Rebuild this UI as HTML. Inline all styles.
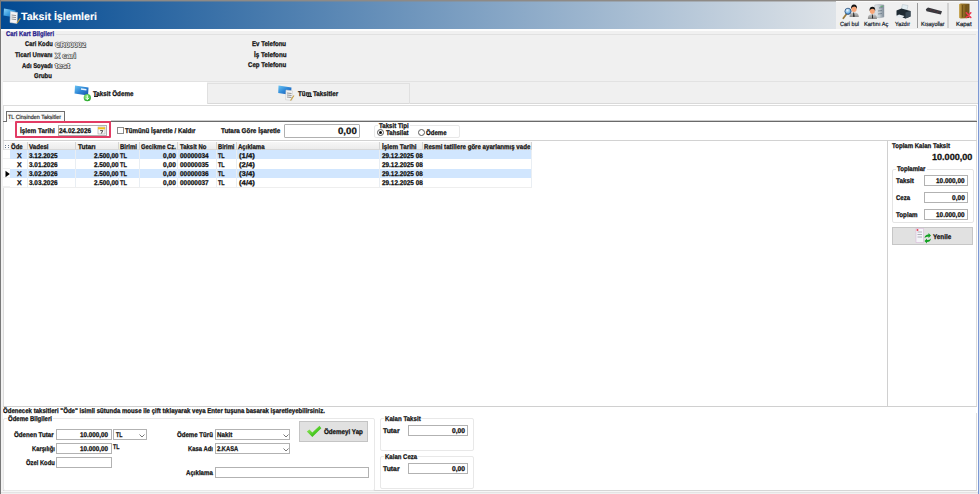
<!DOCTYPE html>
<html><head><meta charset="utf-8">
<style>
*{margin:0;padding:0;box-sizing:border-box}
html,body{width:980px;height:494px;overflow:hidden;background:#fff}
body{position:relative;font-family:"Liberation Sans",sans-serif}
.a{position:absolute}
.t{position:absolute;white-space:nowrap;line-height:10px;text-rendering:geometricPrecision;transform-origin:0 0;-webkit-text-stroke:0.25px currentColor}
</style></head><body>
<div class="a" style="left:0px;top:0px;width:980px;height:494px;background:#fff"></div>
<div class="a" style="left:1px;top:1px;width:835px;height:28px;background:linear-gradient(to right,rgb(2,74,146),rgb(222,227,232))"></div>
<div class="a" style="left:836px;top:1px;width:142px;height:28px;background:#f0f0f0"></div>
<div class="a" style="left:836px;top:1px;width:142px;height:1px;background:#fafafa"></div>
<div class="a" style="left:1px;top:29px;width:977px;height:2px;background:#fcfcfc"></div>
<div class="a" style="left:1px;top:31px;width:977px;height:51px;background:#f0f0f0"></div>
<div class="a" style="left:56px;top:34px;width:920px;height:1px;background:#e1e1e1"></div>
<div class="a" style="left:1px;top:81px;width:977px;height:1px;background:#e2e2e2"></div>
<div class="a" style="left:207px;top:82px;width:771px;height:22px;background:#f0f0f0"></div>
<div class="a" style="left:207px;top:103px;width:771px;height:1px;background:#d9d9d9"></div>
<div class="a" style="left:207px;top:83px;width:203px;height:21px;border:1px solid #e0e0e0;border-bottom:none"></div>
<div class="a" style="left:1px;top:104px;width:977px;height:1px;background:#fff"></div>
<div class="a" style="left:3px;top:105px;width:974px;height:1px;background:#dcdcdc"></div>
<div class="a" style="left:3px;top:105px;width:1px;height:302px;background:#dcdcdc"></div>
<div class="a" style="left:976px;top:105px;width:1px;height:302px;background:#dcdcdc"></div>
<div class="a" style="left:976px;top:413px;width:1px;height:78px;background:#dcdcdc"></div>
<div class="a" style="left:3px;top:490px;width:974px;height:1px;background:#d6d6d6"></div>
<div class="a" style="left:6px;top:111px;width:59px;height:11px;background:#fafafa;border:1px solid #6e6e6e;border-bottom:none"></div>
<div class="a" style="left:3px;top:121px;width:3px;height:1px;background:#6e6e6e"></div>
<div class="a" style="left:65px;top:121px;width:912px;height:1px;background:#6a6a6a"></div>
<div class="a" style="left:111px;top:120px;width:866px;height:1px;background:#cdcdcd"></div>
<div class="a" style="left:15px;top:121px;width:96px;height:17px;border:2px solid #e23c64;border-radius:1px"></div>
<div class="a" style="left:58px;top:125px;width:49px;height:11px;background:#fff;border:1px solid #b0b0b0"></div>
<div class="a" style="left:117px;top:127px;width:7px;height:7px;background:#fff;border:1px solid #8a8a8a"></div>
<div class="a" style="left:284px;top:124px;width:76px;height:14px;background:#fff;border:1px solid #b0b0b0;border-radius:1px"></div>
<div class="a" style="left:374px;top:125px;width:86px;height:13px;border:1px solid #e8e8e8;border-radius:2px"></div>
<div class="a" style="left:377px;top:129px;width:7px;height:7px;background:#fff;border:1px solid #5a5a5a;border-radius:50%"></div>
<div class="a" style="left:379px;top:131px;width:3px;height:3px;background:#111;border-radius:50%"></div>
<div class="a" style="left:418px;top:129px;width:7px;height:7px;background:#fff;border:1px solid #5a5a5a;border-radius:50%"></div>
<div class="a" style="left:3px;top:140px;width:974px;height:1px;background:#d2d2d2"></div>
<div class="a" style="left:887px;top:140px;width:1px;height:266px;background:#d0d0d0"></div>
<div class="a" style="left:3px;top:406px;width:974px;height:1px;background:#d0d0d0"></div>
<div class="a" style="left:4px;top:142px;width:6px;height:8px;background:#fafafa;border-bottom:1px solid #e4e4e4"></div>
<div class="a" style="left:10px;top:142px;width:18px;height:8px;background:linear-gradient(#f6f6f6,#ececec);border-right:1px solid #d4d4d4;border-bottom:1px solid #d8d8d8"></div>
<div class="a" style="left:28px;top:142px;width:48px;height:8px;background:linear-gradient(#f6f6f6,#ececec);border-right:1px solid #d4d4d4;border-bottom:1px solid #d8d8d8"></div>
<div class="a" style="left:76px;top:142px;width:43px;height:8px;background:linear-gradient(#f6f6f6,#ececec);border-right:1px solid #d4d4d4;border-bottom:1px solid #d8d8d8"></div>
<div class="a" style="left:119px;top:142px;width:21px;height:8px;background:linear-gradient(#f6f6f6,#ececec);border-right:1px solid #d4d4d4;border-bottom:1px solid #d8d8d8"></div>
<div class="a" style="left:140px;top:142px;width:38px;height:8px;background:linear-gradient(#f6f6f6,#ececec);border-right:1px solid #d4d4d4;border-bottom:1px solid #d8d8d8"></div>
<div class="a" style="left:178px;top:142px;width:39px;height:8px;background:linear-gradient(#f6f6f6,#ececec);border-right:1px solid #d4d4d4;border-bottom:1px solid #d8d8d8"></div>
<div class="a" style="left:217px;top:142px;width:20px;height:8px;background:linear-gradient(#f6f6f6,#ececec);border-right:1px solid #d4d4d4;border-bottom:1px solid #d8d8d8"></div>
<div class="a" style="left:237px;top:142px;width:143px;height:8px;background:linear-gradient(#f6f6f6,#ececec);border-right:1px solid #d4d4d4;border-bottom:1px solid #d8d8d8"></div>
<div class="a" style="left:380px;top:142px;width:43px;height:8px;background:linear-gradient(#f6f6f6,#ececec);border-right:1px solid #d4d4d4;border-bottom:1px solid #d8d8d8"></div>
<div class="a" style="left:423px;top:142px;width:109px;height:8px;background:linear-gradient(#f6f6f6,#ececec);border-right:1px solid #d4d4d4;border-bottom:1px solid #d8d8d8"></div>
<div class="a" style="left:10px;top:150px;width:522px;height:9px;background:#d1e6fe"></div>
<div class="a" style="left:3px;top:150px;width:7px;height:9px;background:#fff;border-bottom:1px solid #f0f0f0"></div>
<div class="a" style="left:3px;top:159px;width:7px;height:10px;background:#fff;border-bottom:1px solid #f0f0f0"></div>
<div class="a" style="left:10px;top:169px;width:522px;height:9px;background:#d1e6fe"></div>
<div class="a" style="left:3px;top:169px;width:7px;height:9px;background:#fff;border-bottom:1px solid #f0f0f0"></div>
<div class="a" style="left:3px;top:178px;width:7px;height:9px;background:#fff;border-bottom:1px solid #f0f0f0"></div>
<div class="a" style="left:27px;top:150px;width:1px;height:37px;background:#e9eef3"></div>
<div class="a" style="left:75px;top:150px;width:1px;height:37px;background:#e9eef3"></div>
<div class="a" style="left:118px;top:150px;width:1px;height:37px;background:#e9eef3"></div>
<div class="a" style="left:139px;top:150px;width:1px;height:37px;background:#e9eef3"></div>
<div class="a" style="left:177px;top:150px;width:1px;height:37px;background:#e9eef3"></div>
<div class="a" style="left:216px;top:150px;width:1px;height:37px;background:#e9eef3"></div>
<div class="a" style="left:236px;top:150px;width:1px;height:37px;background:#e9eef3"></div>
<div class="a" style="left:379px;top:150px;width:1px;height:37px;background:#e9eef3"></div>
<div class="a" style="left:422px;top:150px;width:1px;height:37px;background:#e9eef3"></div>
<div class="a" style="left:531px;top:150px;width:1px;height:37px;background:#e9eef3"></div>
<div class="a" style="left:3px;top:187px;width:529px;height:1px;background:#eeeeee"></div>
<svg class="a" style="left:5px;top:170px" width="6" height="8"><path d="M0.5 0.8 L4.8 4 L0.5 7.2Z" fill="#000"/></svg>
<div class="a" style="left:5px;top:145px;width:1px;height:1px;background:#6a7a90"></div><div class="a" style="left:5px;top:147px;width:1px;height:1px;background:#6a7a90"></div><div class="a" style="left:8px;top:145px;width:1px;height:1px;background:#6a7a90"></div><div class="a" style="left:8px;top:147px;width:1px;height:1px;background:#6a7a90"></div>
<div class="a" style="left:917px;top:3px;width:1px;height:25px;background:#9a9a9a"></div>
<div class="a" style="left:947px;top:3px;width:2px;height:25px;background:#d2d2d2"></div>
<div class="a" style="left:94px;top:96px;width:4px;height:1px;background:#222"></div>
<div class="a" style="left:307px;top:96px;width:5px;height:1px;background:#222"></div>
<div class="a" style="left:378px;top:124px;width:32px;height:3px;background:#fff"></div>
<div class="a" style="left:892px;top:169px;width:82px;height:54px;border:1px solid #e4e4e4;border-radius:2px"></div>
<div class="a" style="left:896px;top:168px;width:31px;height:3px;background:#fff"></div>
<div class="a" style="left:924px;top:175px;width:44px;height:11px;background:#fff;border:1px solid #b2b2b2"></div>
<div class="a" style="left:924px;top:192px;width:44px;height:11px;background:#fff;border:1px solid #b2b2b2"></div>
<div class="a" style="left:924px;top:209px;width:44px;height:11px;background:#fff;border:1px solid #b2b2b2"></div>
<div class="a" style="left:892px;top:227px;width:81px;height:18px;background:#e1e1e1;border:1px solid #c6c6c6"></div>
<div class="a" style="left:3px;top:418px;width:372px;height:73px;border:1px solid #e8e8e8;border-radius:2px"></div>
<div class="a" style="left:7px;top:417px;width:46px;height:3px;background:#fff"></div>
<div class="a" style="left:56px;top:429px;width:56px;height:11px;background:#fff;border:1px solid #b2b2b2"></div>
<div class="a" style="left:56px;top:443px;width:56px;height:11px;background:#fff;border:1px solid #b2b2b2"></div>
<div class="a" style="left:56px;top:457px;width:56px;height:11px;background:#fff;border:1px solid #b2b2b2"></div>
<div class="a" style="left:113px;top:429px;width:34px;height:11px;background:#fff;border:1px solid #b2b2b2"></div>
<div class="a" style="left:215px;top:429px;width:75px;height:11px;background:#fff;border:1px solid #b2b2b2"></div>
<div class="a" style="left:215px;top:443px;width:75px;height:11px;background:#fff;border:1px solid #b2b2b2"></div>
<div class="a" style="left:215px;top:467px;width:154px;height:11px;background:#fff;border:1px solid #b2b2b2"></div>
<svg class="a" style="left:139px;top:434px" width="6" height="4"><path d="M0.5 0.5 L3 3 L5.5 0.5" fill="none" stroke="#555" stroke-width="0.8"/></svg>
<svg class="a" style="left:283px;top:434px" width="6" height="4"><path d="M0.5 0.5 L3 3 L5.5 0.5" fill="none" stroke="#555" stroke-width="0.8"/></svg>
<svg class="a" style="left:283px;top:448px" width="6" height="4"><path d="M0.5 0.5 L3 3 L5.5 0.5" fill="none" stroke="#555" stroke-width="0.8"/></svg>
<div class="a" style="left:299px;top:421px;width:69px;height:21px;background:#e1e1e1;border:1px solid #c4c4c4"></div>
<div class="a" style="left:380px;top:418px;width:94px;height:33px;border:1px solid #e8e8e8;border-radius:2px"></div>
<div class="a" style="left:380px;top:456px;width:94px;height:33px;border:1px solid #e8e8e8;border-radius:2px"></div>
<div class="a" style="left:384px;top:417px;width:37px;height:3px;background:#fff"></div>
<div class="a" style="left:384px;top:455px;width:34px;height:3px;background:#fff"></div>
<div class="a" style="left:408px;top:425px;width:60px;height:11px;background:#fff;border:1px solid #b2b2b2"></div>
<div class="a" style="left:408px;top:463px;width:60px;height:11px;background:#fff;border:1px solid #b2b2b2"></div>
<div class="a" style="left:1px;top:491px;width:977px;height:1px;background:#f6f6f6"></div>
<div class="a" style="left:1px;top:492px;width:977px;height:1px;background:#e4e4e4"></div>
<div class="a" style="left:1px;top:493px;width:977px;height:1px;background:#f0f0f0"></div>
<div class="a" style="left:0px;top:0px;width:980px;height:1px;background:#8e8a86"></div>
<div class="a" style="left:1px;top:1px;width:835px;height:1px;background:rgba(142,138,134,0.45)"></div>
<!-- title icon -->
<svg class="a" style="left:3px;top:7px" width="19" height="18" viewBox="0 0 19 18">
 <defs><linearGradient id="cg" x1="0" y1="0" x2="1" y2="1"><stop offset="0" stop-color="#8fd4f8"/><stop offset="0.5" stop-color="#3a9ee0"/><stop offset="1" stop-color="#1b5fb0"/></linearGradient></defs>
 <path d="M1 1.5 L12.5 3.5 L12 10.5 L0.5 8.5Z" fill="url(#cg)"/>
 <path d="M7.5 4.5 L14.5 5.5 L14 16.5 L7 15.5Z" fill="#f4f4f4" stroke="#cfcfcf" stroke-width="0.5"/>
 <path d="M8.5 8 L13 8.6 M8.5 10 L13 10.6 M8.5 12 L13 12.6" stroke="#8a8a8a" stroke-width="0.9"/>
 <path d="M17.5 11 L14 16" stroke="#c8a040" stroke-width="1.2"/>
</svg>
<!-- tab1 icon -->
<svg class="a" style="left:74px;top:84px" width="18" height="18" viewBox="0 0 18 18">
 <defs><linearGradient id="cg2" x1="0" y1="0" x2="1" y2="1"><stop offset="0" stop-color="#6cc6f4"/><stop offset="0.5" stop-color="#2d86d6"/><stop offset="1" stop-color="#1a4fa8"/></linearGradient>
 <radialGradient id="gg" cx="0.4" cy="0.35" r="0.7"><stop offset="0" stop-color="#9ef08a"/><stop offset="1" stop-color="#1aa020"/></radialGradient></defs>
 <path d="M1 1.5 L14.5 3.5 L14 11.5 L0.5 9.5Z" fill="url(#cg2)"/>
 <path d="M7 4.2 L12.5 5 L12.4 6.5 L6.9 5.7Z" fill="#e8f4ff"/>
 <circle cx="13.3" cy="13.7" r="3.6" fill="url(#gg)"/>
 <path d="M13.3 11.3 L13.3 15.5 M11.6 13.9 L13.3 15.7 L15 13.9" stroke="#f0fff0" stroke-width="1" fill="none"/>
</svg>
<!-- tab2 icon -->
<svg class="a" style="left:278px;top:85px" width="17" height="17" viewBox="0 0 17 17">
 <path d="M0.5 0.5 L13.5 2.5 L13 10 L0.2 8Z" fill="url(#cg2)"/>
 <path d="M8 5 L14.5 5.8 L14 15.5 L7.5 14.7Z" fill="#f2f2f2" stroke="#c8c8c8" stroke-width="0.5"/>
 <path d="M9 8 L13.5 8.5 M9 10 L13.5 10.5 M9 12 L13.5 12.5" stroke="#8a8a8a" stroke-width="0.9"/>
 <path d="M16 10.5 L12.5 15.5" stroke="#c8a040" stroke-width="1.1"/>
</svg>
<!-- cari bul -->
<svg class="a" style="left:842px;top:3px" width="18" height="17" viewBox="0 0 18 17">
 <defs><radialGradient id="lens" cx="0.4" cy="0.35" r="0.7"><stop offset="0" stop-color="#f0f8ff"/><stop offset="0.6" stop-color="#7ab8e8"/><stop offset="1" stop-color="#2a68a8"/></radialGradient>
 <linearGradient id="shirt" x1="0" y1="0" x2="0" y2="1"><stop offset="0" stop-color="#c8c8c8"/><stop offset="1" stop-color="#888"/></linearGradient></defs>
 <path d="M7.5 14 Q7.5 9.8 11 9.5 L13 9.5 Q16.8 9.8 16.8 14Z" fill="url(#shirt)"/>
 <path d="M11.3 9.6 L12 9.6 L12.6 13.5 L11.9 14 L11.2 13.5Z" fill="#1a1a1a"/>
 <ellipse cx="12" cy="5.8" rx="2.7" ry="3.3" fill="#f7a577"/>
 <path d="M9.1 6 Q8.8 1.6 12 1.5 Q15.4 1.5 15 6 Q14.6 3.6 12.2 3.5 Q9.8 3.5 9.1 6Z" fill="#141414"/>
 <path d="M1.3 15.3 L4.3 11.2" stroke="#9a7a3a" stroke-width="1.7" stroke-linecap="round"/>
 <circle cx="6" cy="8.3" r="3.1" fill="url(#lens)" stroke="#30507a" stroke-width="0.8"/>
</svg>
<!-- kartini ac -->
<svg class="a" style="left:867px;top:3px" width="19" height="17" viewBox="0 0 19 17">
 <defs><linearGradient id="cyl" x1="0" y1="0" x2="1" y2="0"><stop offset="0" stop-color="#e8ecef"/><stop offset="0.5" stop-color="#c4ccd2"/><stop offset="1" stop-color="#7a8894"/></linearGradient></defs>
 <path d="M7.8 2 Q12.5 1 17 2 L17 14 Q12.5 15.5 7.8 14Z" fill="url(#cyl)" stroke="#a0aab2" stroke-width="0.5"/>
 <path d="M12 5 L15.5 4.5 M11 8 L15 7.5 M11 11 L15 10.5" stroke="#6a7a86" stroke-width="0.8"/>
 <path d="M13.5 3.5 L16 3.2" stroke="#50b060" stroke-width="0.8"/>
 <path d="M0.8 16 Q0.8 11.6 4.3 11.3 L6.3 11.3 Q10 11.6 10 16Z" fill="url(#shirt)"/>
 <path d="M4.9 11.4 L5.6 11.4 L6.1 15.3 L5.2 15.6Z" fill="#1a1a1a"/>
 <ellipse cx="5.3" cy="7.8" rx="2.6" ry="3.1" fill="#f7a577"/>
 <path d="M2.5 8 Q2.3 3.8 5.4 3.8 Q8.5 3.8 8.2 8 Q7.8 5.8 5.5 5.7 Q3.2 5.7 2.5 8Z" fill="#141414"/>
</svg>
<!-- yazdir -->
<svg class="a" style="left:895px;top:3px" width="17" height="17" viewBox="0 0 17 17">
 <path d="M7.5 1.5 L13 2.5 L11.5 8.5 L6 7.5Z" fill="#e4eef2" stroke="#b0bcc4" stroke-width="0.5"/>
 <path d="M1.5 7.5 L6.5 5.5 L15.5 8 L15.5 13.5 L10.5 15.5 L1.5 12.5Z" fill="#1e2a32"/>
 <path d="M10.5 9.5 L15.5 8 L15.5 13.5 L10.5 15.5Z" fill="#3a4a56"/>
 <path d="M0.5 13.5 L4 11.5 L9.5 13 L6.5 15.5Z" fill="#e6ecf0"/>
</svg>
<!-- kisayollar -->
<svg class="a" style="left:925px;top:7px" width="18" height="9" viewBox="0 0 18 9">
 <path d="M0.8 2.3 L3 0.6 L17 4.3 L15.8 7.6 L1.5 4.2Z" fill="#38383e"/>
 <path d="M5 2.8 L6.3 3.1 M8.5 3.8 L9.8 4.1 M12 4.8 L13.3 5.1" stroke="#8a3030" stroke-width="0.6"/>
</svg>
<!-- kapat -->
<svg class="a" style="left:958px;top:3px" width="14" height="16" viewBox="0 0 14 16">
 <defs><linearGradient id="dg" x1="0" y1="0" x2="1" y2="0"><stop offset="0" stop-color="#d0b060"/><stop offset="0.25" stop-color="#9a7628"/><stop offset="1" stop-color="#6a4e18"/></linearGradient></defs>
 <path d="M1 1.2 L2.5 0.5 L11.5 0.8 L11.5 15 L2.5 15.5 L1 14.8Z" fill="url(#dg)"/>
 <path d="M4.5 2 L4.5 14.3 M8 2 L8 14.3" stroke="#5e4414" stroke-width="0.7"/>
 <path d="M8.3 9.8 L12.8 14.5 M12.8 9.8 L8.3 14.5" stroke="#f03850" stroke-width="1.6" stroke-linecap="round"/>
</svg>
<!-- calendar -->
<svg class="a" style="left:97px;top:126px" width="9" height="9" viewBox="0 0 9 9">
 <rect x="1" y="1" width="7" height="7" fill="#fafafa" stroke="#a0a0a0" stroke-width="0.6"/>
 <rect x="1" y="1.3" width="7" height="2" fill="#f0c020"/>
 <path d="M3.2 4.6 L5.8 4.6 L4.3 7.5" stroke="#333" stroke-width="0.9" fill="none"/>
</svg>
<!-- yenile -->
<svg class="a" style="left:915px;top:228px" width="17" height="16" viewBox="0 0 17 16">
 <path d="M1 0.5 L8.5 0.5 L8.5 14.5 L1 14.5Z" fill="#f4f4f8" stroke="#d8b8d8" stroke-width="0.6"/>
 <path d="M2.5 4 L7 4 M2.5 6.5 L7 6.5 M2.5 9 L7 9" stroke="#a0a0a8" stroke-width="0.8"/>
 <circle cx="2.5" cy="2" r="1" fill="#e84050"/>
 <path d="M9.5 10 Q10 6.5 13.5 6.5 L13.5 5 L16 7.5 L13.5 10 L13.5 8.5 Q11 8.5 9.5 10Z" fill="#10a020"/>
 <path d="M16 10.5 Q15.5 14 12 14 L12 15.5 L9.5 13 L12 10.5 L12 12 Q14.5 12 16 10.5Z" fill="#10a020"/>
</svg>
<!-- check -->
<svg class="a" style="left:306px;top:425px" width="17" height="14" viewBox="0 0 17 14">
 <defs><linearGradient id="ck" x1="0" y1="0" x2="1" y2="1"><stop offset="0" stop-color="#a8ee70"/><stop offset="0.6" stop-color="#48c820"/><stop offset="1" stop-color="#208a10"/></linearGradient></defs>
 <path d="M0.8 6.5 L3.5 4.5 L6.3 7.5 L13.5 0.8 L15.3 3.2 L6.3 12 Z" fill="url(#ck)"/>
</svg>

<div class="t" style="left:10.70px;top:143px;font-size:6.9px;font-weight:bold;color:#101010;transform:scaleX(0.864);">Öde</div>
<div class="t" style="left:29.29px;top:143px;font-size:6.9px;font-weight:bold;color:#101010;transform:scaleX(0.897);">Vadesi</div>
<div class="t" style="left:77.67px;top:143px;font-size:6.9px;font-weight:bold;color:#101010;transform:scaleX(0.946);">Tutarı</div>
<div class="t" style="left:120.20px;top:143px;font-size:6.9px;font-weight:bold;color:#101010;transform:scaleX(0.864);">Birimi</div>
<div class="t" style="left:141.11px;top:143px;font-size:6.9px;font-weight:bold;color:#101010;transform:scaleX(0.850);">Gecikme Cz.</div>
<div class="t" style="left:179.70px;top:143px;font-size:6.9px;font-weight:bold;color:#101010;transform:scaleX(0.864);">Taksit No</div>
<div class="t" style="left:217.71px;top:143px;font-size:6.9px;font-weight:bold;color:#101010;transform:scaleX(0.843);">Birimi</div>
<div class="t" style="left:238.20px;top:143px;font-size:6.9px;font-weight:bold;color:#101010;transform:scaleX(0.878);">Açıklama</div>
<div class="t" style="left:381.68px;top:143px;font-size:6.9px;font-weight:bold;color:#101010;transform:scaleX(0.915);">İşlem Tarihi</div>
<div class="t" style="left:423.99px;top:143px;font-size:6.9px;font-weight:bold;color:#101010;transform:scaleX(0.890);">Resmi tatillere göre ayarlanmış vade</div>
<div class="t" style="left:16.65px;top:152px;font-size:6.9px;font-weight:bold;color:#101010;transform:scaleX(1.022);">X</div>
<div class="t" style="left:29.28px;top:152px;font-size:6.9px;font-weight:bold;color:#101010;transform:scaleX(0.930);">3.12.2025</div>
<div class="t" style="left:93.68px;top:152px;font-size:6.9px;font-weight:bold;color:#101010;transform:scaleX(0.917);">2.500,00</div>
<div class="t" style="left:120.42px;top:152px;font-size:6.9px;font-weight:bold;color:#101010;transform:scaleX(0.814);">TL</div>
<div class="t" style="left:163.17px;top:152px;font-size:6.9px;font-weight:bold;color:#101010;transform:scaleX(0.958);">0,00</div>
<div class="t" style="left:179.68px;top:152px;font-size:6.9px;font-weight:bold;color:#101010;transform:scaleX(0.933);">00000034</div>
<div class="t" style="left:217.93px;top:152px;font-size:6.9px;font-weight:bold;color:#101010;transform:scaleX(0.788);">TL</div>
<div class="t" style="left:239.41px;top:152px;font-size:6.9px;font-weight:bold;color:#101010;transform:scaleX(1.126);">(1/4)</div>
<div class="t" style="left:381.68px;top:152px;font-size:6.9px;font-weight:bold;color:#101010;transform:scaleX(0.925);">29.12.2025 08</div>
<div class="t" style="left:16.65px;top:161px;font-size:6.9px;font-weight:bold;color:#101010;transform:scaleX(1.022);">X</div>
<div class="t" style="left:29.28px;top:161px;font-size:6.9px;font-weight:bold;color:#101010;transform:scaleX(0.930);">3.01.2026</div>
<div class="t" style="left:93.68px;top:161px;font-size:6.9px;font-weight:bold;color:#101010;transform:scaleX(0.917);">2.500,00</div>
<div class="t" style="left:120.42px;top:161px;font-size:6.9px;font-weight:bold;color:#101010;transform:scaleX(0.814);">TL</div>
<div class="t" style="left:163.17px;top:161px;font-size:6.9px;font-weight:bold;color:#101010;transform:scaleX(0.958);">0,00</div>
<div class="t" style="left:179.68px;top:161px;font-size:6.9px;font-weight:bold;color:#101010;transform:scaleX(0.933);">00000035</div>
<div class="t" style="left:217.93px;top:161px;font-size:6.9px;font-weight:bold;color:#101010;transform:scaleX(0.788);">TL</div>
<div class="t" style="left:239.41px;top:161px;font-size:6.9px;font-weight:bold;color:#101010;transform:scaleX(1.126);">(2/4)</div>
<div class="t" style="left:381.68px;top:161px;font-size:6.9px;font-weight:bold;color:#101010;transform:scaleX(0.925);">29.12.2025 08</div>
<div class="t" style="left:16.65px;top:170px;font-size:6.9px;font-weight:bold;color:#101010;transform:scaleX(1.022);">X</div>
<div class="t" style="left:29.28px;top:170px;font-size:6.9px;font-weight:bold;color:#101010;transform:scaleX(0.930);">3.02.2026</div>
<div class="t" style="left:93.68px;top:170px;font-size:6.9px;font-weight:bold;color:#101010;transform:scaleX(0.917);">2.500,00</div>
<div class="t" style="left:120.42px;top:170px;font-size:6.9px;font-weight:bold;color:#101010;transform:scaleX(0.814);">TL</div>
<div class="t" style="left:163.17px;top:170px;font-size:6.9px;font-weight:bold;color:#101010;transform:scaleX(0.958);">0,00</div>
<div class="t" style="left:179.68px;top:170px;font-size:6.9px;font-weight:bold;color:#101010;transform:scaleX(0.933);">00000036</div>
<div class="t" style="left:217.93px;top:170px;font-size:6.9px;font-weight:bold;color:#101010;transform:scaleX(0.788);">TL</div>
<div class="t" style="left:239.41px;top:170px;font-size:6.9px;font-weight:bold;color:#101010;transform:scaleX(1.126);">(3/4)</div>
<div class="t" style="left:381.68px;top:170px;font-size:6.9px;font-weight:bold;color:#101010;transform:scaleX(0.925);">29.12.2025 08</div>
<div class="t" style="left:16.65px;top:179px;font-size:6.9px;font-weight:bold;color:#101010;transform:scaleX(1.022);">X</div>
<div class="t" style="left:29.28px;top:179px;font-size:6.9px;font-weight:bold;color:#101010;transform:scaleX(0.930);">3.03.2026</div>
<div class="t" style="left:93.68px;top:179px;font-size:6.9px;font-weight:bold;color:#101010;transform:scaleX(0.917);">2.500,00</div>
<div class="t" style="left:120.42px;top:179px;font-size:6.9px;font-weight:bold;color:#101010;transform:scaleX(0.814);">TL</div>
<div class="t" style="left:163.17px;top:179px;font-size:6.9px;font-weight:bold;color:#101010;transform:scaleX(0.958);">0,00</div>
<div class="t" style="left:179.68px;top:179px;font-size:6.9px;font-weight:bold;color:#101010;transform:scaleX(0.933);">00000037</div>
<div class="t" style="left:217.93px;top:179px;font-size:6.9px;font-weight:bold;color:#101010;transform:scaleX(0.788);">TL</div>
<div class="t" style="left:239.41px;top:179px;font-size:6.9px;font-weight:bold;color:#101010;transform:scaleX(1.126);">(4/4)</div>
<div class="t" style="left:381.68px;top:179px;font-size:6.9px;font-weight:bold;color:#101010;transform:scaleX(0.925);">29.12.2025 08</div>
<div class="t" style="left:21.47px;top:12px;font-size:10.5px;font-weight:bold;color:#fff;transform:scaleX(1.013);-webkit-text-stroke:0.1px #fff;">Taksit İşlemleri</div>
<div class="t" style="left:5.71px;top:30px;font-size:6.9px;font-weight:bold;color:#24188a;transform:scaleX(0.853);">Cari Kart Bilgileri</div>
<div class="t" style="left:24.51px;top:40px;font-size:6.9px;font-weight:bold;color:#101010;transform:scaleX(0.843);">Cari Kodu</div>
<div class="t" style="left:14.70px;top:51px;font-size:6.9px;font-weight:bold;color:#101010;transform:scaleX(0.870);">Ticari Unvanı</div>
<div class="t" style="left:21.70px;top:62px;font-size:6.9px;font-weight:bold;color:#101010;transform:scaleX(0.858);">Adı Soyadı</div>
<div class="t" style="left:34.40px;top:72px;font-size:6.9px;font-weight:bold;color:#101010;transform:scaleX(0.865);">Grubu</div>
<div class="t" style="left:252.20px;top:40px;font-size:6.9px;font-weight:bold;color:#101010;transform:scaleX(0.884);">Ev Telefonu</div>
<div class="t" style="left:253.69px;top:51px;font-size:6.9px;font-weight:bold;color:#101010;transform:scaleX(0.909);">İş Telefonu</div>
<div class="t" style="left:248.09px;top:61px;font-size:6.9px;font-weight:bold;color:#101010;transform:scaleX(0.885);">Cep Telefonu</div>
<div class="t" style="left:54.64px;top:41px;font-size:6.9px;font-weight:bold;color:#f2f2f2;transform:scaleX(1.054);-webkit-text-stroke:0.9px #3a3a3a;paint-order:stroke fill;text-shadow:0.7px 0.7px 0.6px #666;">CR00002</div>
<div class="t" style="left:54.62px;top:52px;font-size:6.9px;font-weight:bold;color:#f2f2f2;transform:scaleX(1.105);-webkit-text-stroke:0.9px #3a3a3a;paint-order:stroke fill;text-shadow:0.7px 0.7px 0.6px #666;">X cari</div>
<div class="t" style="left:54.59px;top:62px;font-size:6.9px;font-weight:bold;color:#f2f2f2;transform:scaleX(1.200);-webkit-text-stroke:0.9px #3a3a3a;paint-order:stroke fill;text-shadow:0.7px 0.7px 0.6px #666;">test</div>
<div class="t" style="left:839.73px;top:20px;font-size:6.0px;font-weight:normal;color:#101828;transform:scaleX(0.917);-webkit-text-stroke:0.2px #101828;">Cari bul</div>
<div class="t" style="left:863.72px;top:20px;font-size:6.0px;font-weight:normal;color:#101828;transform:scaleX(0.933);-webkit-text-stroke:0.2px #101828;">Kartını Aç</div>
<div class="t" style="left:894.73px;top:20px;font-size:6.0px;font-weight:normal;color:#101828;transform:scaleX(0.896);-webkit-text-stroke:0.2px #101828;">Yazdır</div>
<div class="t" style="left:920.73px;top:20px;font-size:6.0px;font-weight:normal;color:#101828;transform:scaleX(0.893);-webkit-text-stroke:0.2px #101828;">Kısayollar</div>
<div class="t" style="left:955.70px;top:20px;font-size:6.0px;font-weight:normal;color:#101828;transform:scaleX(0.995);-webkit-text-stroke:0.2px #101828;">Kapat</div>
<div class="t" style="left:93.39px;top:90px;font-size:6.9px;font-weight:bold;color:#101010;transform:scaleX(0.904);">Taksit Ödeme</div>
<div class="t" style="left:297.99px;top:90px;font-size:6.9px;font-weight:bold;color:#101010;transform:scaleX(0.909);">Tüm Taksitler</div>
<div class="t" style="left:8.23px;top:113px;font-size:6.0px;font-weight:normal;color:#1a1a1a;transform:scaleX(0.904);-webkit-text-stroke:0.15px #1a1a1a;">TL Cinsinden Taksitler</div>
<div class="t" style="left:20.18px;top:127px;font-size:6.9px;font-weight:bold;color:#101010;transform:scaleX(0.921);">İşlem Tarihi</div>
<div class="t" style="left:59.48px;top:127px;font-size:6.9px;font-weight:bold;color:#101010;transform:scaleX(0.928);">24.02.2026</div>
<div class="t" style="left:124.69px;top:127px;font-size:6.9px;font-weight:bold;color:#101010;transform:scaleX(0.898);">Tümünü İşaretle / Kaldır</div>
<div class="t" style="left:220.93px;top:127px;font-size:6.9px;font-weight:bold;color:#101010;transform:scaleX(0.918);">Tutara Göre İşaretle</div>
<div class="t" style="left:337.92px;top:126px;font-size:9.2px;font-weight:bold;color:#101010;transform:scaleX(1.048);">0,00</div>
<div class="t" style="left:378.99px;top:122px;font-size:6.9px;font-weight:bold;color:#101010;transform:scaleX(0.887);">Taksit Tipi</div>
<div class="t" style="left:386.09px;top:129px;font-size:6.9px;font-weight:bold;color:#101010;transform:scaleX(0.885);">Tahsilat</div>
<div class="t" style="left:425.90px;top:129px;font-size:6.9px;font-weight:bold;color:#101010;transform:scaleX(0.877);">Ödeme</div>
<div class="t" style="left:892.30px;top:142px;font-size:6.9px;font-weight:bold;color:#101010;transform:scaleX(0.878);">Toplam Kalan Taksit</div>
<div class="t" style="left:931.74px;top:152px;font-size:8.9px;font-weight:bold;color:#101010;transform:scaleX(1.023);">10.000,00</div>
<div class="t" style="left:897.20px;top:165px;font-size:6.9px;font-weight:bold;color:#101010;transform:scaleX(0.878);">Toplamlar</div>
<div class="t" style="left:895.68px;top:177px;font-size:6.9px;font-weight:bold;color:#101010;transform:scaleX(0.923);">Taksit</div>
<div class="t" style="left:935.98px;top:177px;font-size:6.9px;font-weight:bold;color:#101010;transform:scaleX(0.930);">10.000,00</div>
<div class="t" style="left:895.70px;top:194px;font-size:6.9px;font-weight:bold;color:#101010;transform:scaleX(0.876);">Ceza</div>
<div class="t" style="left:951.67px;top:194px;font-size:6.9px;font-weight:bold;color:#101010;transform:scaleX(0.958);">0,00</div>
<div class="t" style="left:895.69px;top:211px;font-size:6.9px;font-weight:bold;color:#101010;transform:scaleX(0.900);">Toplam</div>
<div class="t" style="left:935.98px;top:211px;font-size:6.9px;font-weight:bold;color:#101010;transform:scaleX(0.930);">10.000,00</div>
<div class="t" style="left:933.08px;top:233px;font-size:6.9px;font-weight:bold;color:#101010;transform:scaleX(0.914);">Yenile</div>
<div class="t" style="left:2.90px;top:407px;font-size:6.9px;font-weight:bold;color:#101010;transform:scaleX(0.880);">Ödenecek taksitleri "Öde" isimli sütunda mouse ile çift tıklayarak veya Enter tuşuna basarak işaretleyebilirsiniz.</div>
<div class="t" style="left:7.70px;top:415px;font-size:6.9px;font-weight:bold;color:#101010;transform:scaleX(0.869);">Ödeme Bilgileri</div>
<div class="t" style="left:13.69px;top:431px;font-size:6.9px;font-weight:bold;color:#101010;transform:scaleX(0.893);">Ödenen Tutar</div>
<div class="t" style="left:32.11px;top:445px;font-size:6.9px;font-weight:bold;color:#101010;transform:scaleX(0.840);">Karşılığı</div>
<div class="t" style="left:26.21px;top:459px;font-size:6.9px;font-weight:bold;color:#101010;transform:scaleX(0.844);">Özel Kodu</div>
<div class="t" style="left:80.28px;top:431px;font-size:6.9px;font-weight:bold;color:#101010;transform:scaleX(0.916);">10.000,00</div>
<div class="t" style="left:80.28px;top:445px;font-size:6.9px;font-weight:bold;color:#101010;transform:scaleX(0.916);">10.000,00</div>
<div class="t" style="left:116.04px;top:431px;font-size:6.9px;font-weight:bold;color:#101010;transform:scaleX(0.750);">TL</div>
<div class="t" style="left:113.44px;top:443px;font-size:6.9px;font-weight:bold;color:#101010;transform:scaleX(0.762);">TL</div>
<div class="t" style="left:176.60px;top:431px;font-size:6.9px;font-weight:bold;color:#101010;transform:scaleX(0.884);">Ödeme Türü</div>
<div class="t" style="left:187.61px;top:445px;font-size:6.9px;font-weight:bold;color:#101010;transform:scaleX(0.850);">Kasa Adı</div>
<div class="t" style="left:185.59px;top:469px;font-size:6.9px;font-weight:bold;color:#101010;transform:scaleX(0.888);">Açıklama</div>
<div class="t" style="left:217.39px;top:431px;font-size:6.9px;font-weight:bold;color:#101010;transform:scaleX(0.902);">Nakit</div>
<div class="t" style="left:217.41px;top:445px;font-size:6.9px;font-weight:bold;color:#101010;transform:scaleX(0.837);">2.KASA</div>
<div class="t" style="left:323.69px;top:428px;font-size:6.9px;font-weight:bold;color:#101010;transform:scaleX(0.901);">Ödemeyi Yap</div>
<div class="t" style="left:384.59px;top:415px;font-size:6.9px;font-weight:bold;color:#101010;transform:scaleX(0.890);">Kalan Taksit</div>
<div class="t" style="left:384.60px;top:453px;font-size:6.9px;font-weight:bold;color:#101010;transform:scaleX(0.875);">Kalan Ceza</div>
<div class="t" style="left:383.46px;top:427px;font-size:6.9px;font-weight:bold;color:#101010;transform:scaleX(0.991);">Tutar</div>
<div class="t" style="left:383.46px;top:465px;font-size:6.9px;font-weight:bold;color:#101010;transform:scaleX(0.991);">Tutar</div>
<div class="t" style="left:451.56px;top:427px;font-size:6.9px;font-weight:bold;color:#101010;transform:scaleX(0.973);">0,00</div>
<div class="t" style="left:451.56px;top:465px;font-size:6.9px;font-weight:bold;color:#101010;transform:scaleX(0.973);">0,00</div>
<div class="a" style="left:0px;top:0px;width:1px;height:494px;background:#787878"></div>
<div class="a" style="left:1px;top:31px;width:2px;height:460px;background:#f2f2f2"></div>
<div class="a" style="left:978px;top:0px;width:1px;height:494px;background:#7c98d4"></div>
<div class="a" style="left:979px;top:0px;width:1px;height:494px;background:#dde6f4"></div>
</body></html>
